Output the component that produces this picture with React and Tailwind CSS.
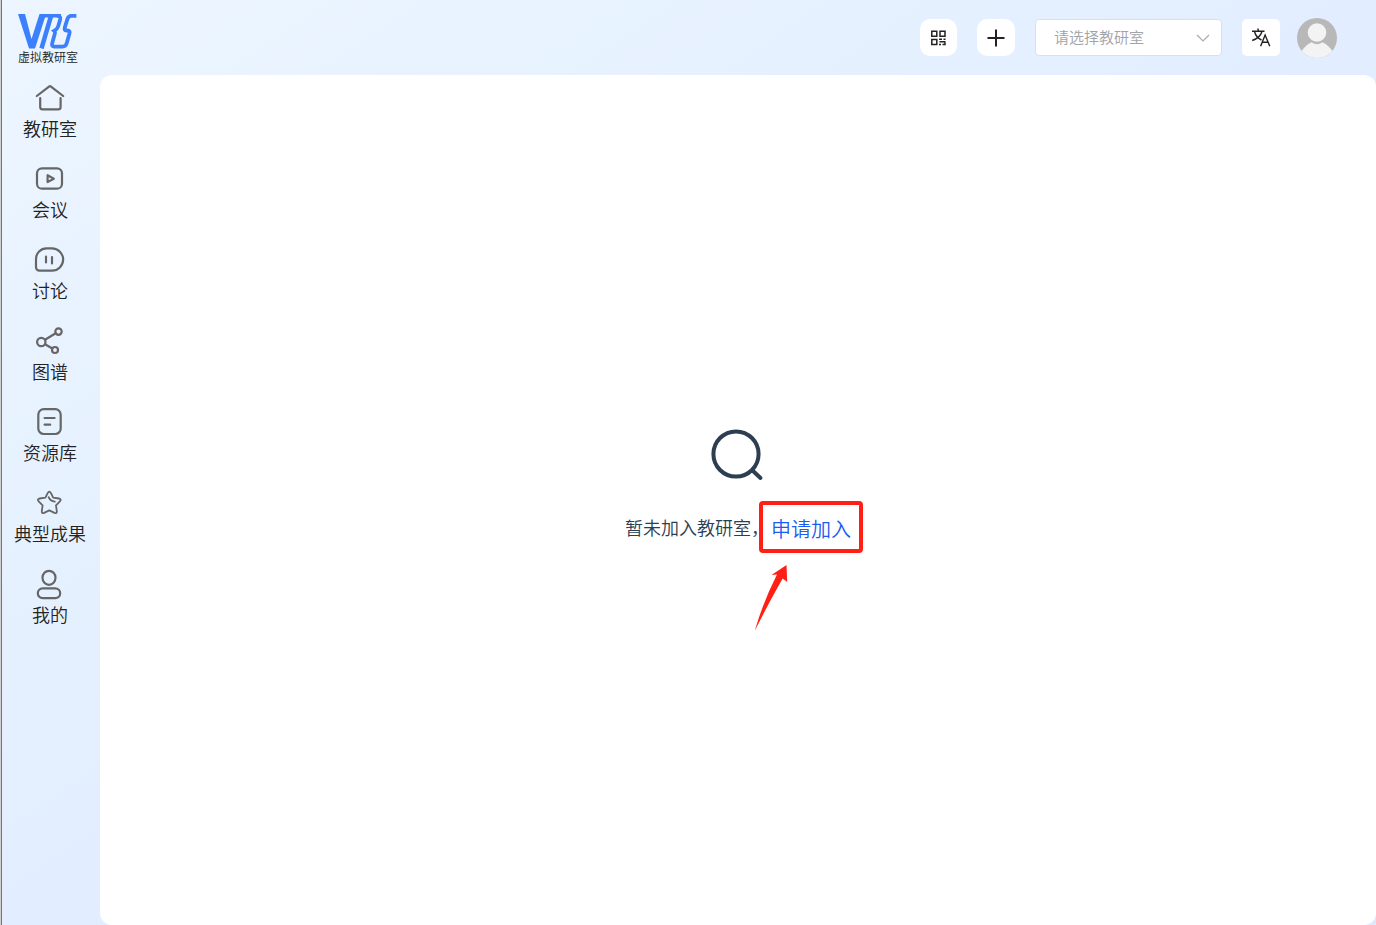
const NAV = [
  {
    label: '教研室',
    icon: (
      <>
        <path d="M2.8 14 15 4.6q1-.8 2 0L29.2 14" />
        <path d="M6.2 16v9q0 2.4 2.4 2.4h15.600q2.400 0 2.400-2.400v-9" />
      </>
    ),
  },
  {
    label: '会议',
    icon: (
      <>
        <rect x="3" y="5.300" width="25" height="20.400" rx="5" />
        <path d="M13.600 12.200v6.900l6.200-3.400z" />
      </>
    ),
  },
  {
    label: '讨论',
    icon: (
      <>
        <path d="M12.500 4.400h5.500a11 11 0 0 1 0 22.300H5.500A3.500 3.500 0 0 1 2 23.200v-8.300A10.500 10.500 0 0 1 12.500 4.400z" />
        <path d="M12 12.500v6M18 13v6.500" />
      </>
    ),
  },
  {
    label: '图谱',
    icon: (
      <>
        <circle cx="7.300" cy="17" r="4.200" />
        <circle cx="24.500" cy="6.600" r="3.200" />
        <circle cx="21" cy="25" r="3" />
        <path d="M11 14.800 21.700 8.300M11.100 19.200l7.200 4.300" />
      </>
    ),
  },
  {
    label: '资源库',
    icon: (
      <>
        <rect x="4.300" y="3.200" width="22.400" height="24.800" rx="5.500" />
        <path d="M10.600 12h10M10.600 18.700h5.600" />
      </>
    ),
  },
  {
    label: '典型成果',
    icon: (
      <g strokeWidth="1.800">
        <path d="M13.800 5.900q1.500-2.600 3 0l2.400 4.700 5.700.9q3 .7 1 2.800l-3.900 4 .8 5.900q.2 2.700-2.300 1.700l-5.200-2.500-5.200 2.500q-2.500 1-2.300-1.700l.8-5.900-3.900-4q-2-2.100 1-2.800l5.700-.9z" />
        <path d="M14.600 10.200q1.800 4.200 6.200 4.400" />
      </g>
    ),
  },
  {
    label: '我的',
    icon: (
      <>
        <ellipse cx="15" cy="9.800" rx="6.500" ry="7" />
        <rect x="3.800" y="20.400" width="22.400" height="9.800" rx="4.900" />
      </>
    ),
  },
];

function Logo() {
  return (
    <svg viewBox="0 0 60 36" className="h-9 w-[60px]" fill="none" stroke="#3d80fb" aria-hidden="true">
      <path d="M0 1h7l6.500 25L21.500 1H43v3.500H27L17 35.500h-6z" fill="#3d80fb" stroke="none" />
      <path d="M33 3 23.500 35.500" strokeWidth="4.500" />
      <path d="M39 2.900q4 0 3.200 3.300l-2 7q-.8 2.800-4 4.600 1.200 1 .6 3l-2.600 9.500q-.8 3.300 2 3.300h8.500q3 0 4-3.300l2.700-9.500q1-3.300-2-3.300h-1q-2.500 0-1.500-3.400l2.500-8q1-3.200 4-3.200h5" strokeWidth="3.800" />
    </svg>
  );
}

export default function App() {
  return (
    <div className="flex min-h-screen bg-linear-to-br from-[#edf6ff] via-[#e2eeff] to-[#dce9ff] font-['Noto_Sans_CJK_SC',sans-serif] font-[350] text-[#222]">
      <aside className="flex w-[100px] shrink-0 flex-col items-center border-l border-[#d0d0d0] pr-px shadow-[inset_1px_0_0_#737579]">
        <a href="#home" className="mr-1 flex flex-col items-center pt-[13px] text-xs leading-4">
          <Logo />
          虚拟教研室
        </a>
        <nav className="mt-[17px] flex flex-col gap-[23px]" aria-label="主导航">
          {NAV.map((item) => (
            <a key={item.label} href="#section" className="flex flex-col items-center gap-[2px] text-lg leading-6 whitespace-nowrap">
              <svg viewBox="0 0 32 32" className="size-8" fill="none" stroke="#666" strokeWidth="2.200" strokeLinecap="round" strokeLinejoin="round" aria-hidden="true">
                {item.icon}
              </svg>
              {item.label}
            </a>
          ))}
        </nav>
      </aside>

      <div className="flex min-w-0 flex-1 flex-col">
        <header className="flex h-[75px] items-center justify-end gap-[17px] pr-[39px]">
          <div className="flex items-center gap-5">
            <button type="button" aria-label="二维码" className="flex size-[37px] items-center justify-center rounded-[10px] bg-white">
              <svg viewBox="0 0 16 16" className="size-4" fill="none" stroke="#222" strokeWidth="1.500" aria-hidden="true">
                <path d="M.8 1.200h5v5h-5zM9 1.200h5v5H9zM.8 9.400h5v5h-5zM8 9.200h3M12.500 9.200h2M8.500 11.700h6M8 14.500h2M11.500 14.500H14v-2" />
              </svg>
            </button>
            <button type="button" aria-label="新建" className="flex h-[37px] w-[38px] items-center justify-center rounded-[10px] bg-white">
              <svg viewBox="0 0 18 18" className="size-[18px]" stroke="#222" strokeWidth="2" aria-hidden="true">
                <path d="M9 .5v17M.5 9h17" />
              </svg>
            </button>
            <div className="relative">
              <select aria-label="请选择教研室" className="block h-[37px] w-[187px] appearance-none rounded-sm border border-[#dcdfe6] bg-white pl-[18px] text-[15px] text-[#a0a3a9]">
                <option>请选择教研室</option>
              </select>
              <svg viewBox="0 0 14 8" className="pointer-events-none absolute top-[15px] right-3 h-2 w-[14px]" fill="none" stroke="#a8abb2" strokeWidth="1.200" aria-hidden="true">
                <path d="m1 1 6 6 6-6" />
              </svg>
            </div>
            <button type="button" aria-label="切换语言" className="flex h-[37px] w-[38px] items-center justify-center rounded-[5px] bg-white">
              <svg viewBox="0 0 20 20" className="size-5" fill="none" stroke="#222" strokeWidth="1.400" aria-hidden="true">
                <path d="M1 3.200h12.500M6.700.5l1 2.700M3.500 3.500q1.500 6 7 8.500M11 3.500Q9 10 1.200 12.500M9.600 18.200l4.500-11.200 4.700 11.200M11 14.300h6.200" />
              </svg>
            </button>
          </div>
          <button type="button" aria-label="个人中心" className="size-10 overflow-hidden rounded-full bg-[#b8b8b8]">
            <svg viewBox="0 0 40 40" className="size-10" fill="#f3f3f3" aria-hidden="true">
              <circle cx="20" cy="14.500" r="9.300" />
              <path d="M4 34q4-6.500 10.500-9.700 5.500 3.800 11 0Q32 27.500 36 34v6H4z" />
            </svg>
          </button>
        </header>

        <main className="flex flex-1 flex-col items-center justify-center rounded-xl bg-white pb-7">
          <svg viewBox="0 0 54 54" className="size-[54px]" fill="none" stroke="#2c3e50" strokeWidth="4" strokeLinecap="round" aria-hidden="true">
            <circle cx="25" cy="25" r="22.600" />
            <path d="m41.500 41.500 8 7.500" />
          </svg>
          <p className="mt-7 flex items-end gap-[2px] text-lg leading-8 text-[#2c3e50]">
            暂未加入教研室，
            <a href="#join" className="relative text-xl leading-7 text-[#1d5cf0]">
              申请加入
              <span className="pointer-events-none absolute -inset-x-3 -top-[14px] -bottom-[10px] rounded-sm border-4 border-[#ff1f14]" />
              <svg viewBox="0 0 34 68" className="pointer-events-none absolute top-[49px] -left-[17px] h-[68px] w-[34px]" fill="#ff1f14" aria-hidden="true">
                <path d="M32.500 1 17.500 11l5.500-.5Q9 38 .7 67 13 42 28.600 14.500l4.600 3.500z" />
              </svg>
            </a>
          </p>
        </main>
      </div>
    </div>
  );
}
